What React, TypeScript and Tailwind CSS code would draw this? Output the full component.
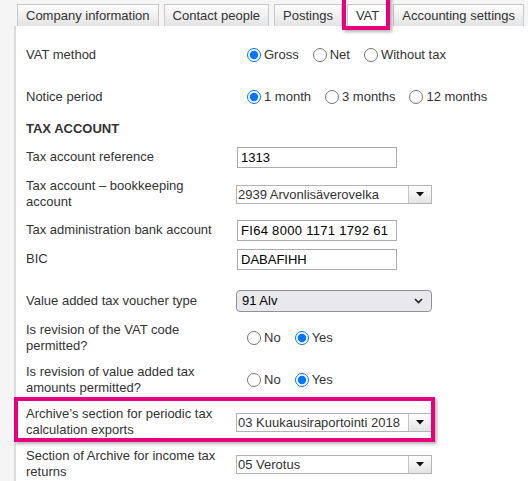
import React from "react";

const Tab = ({ label, active, empty }: { label: string; active?: boolean; empty?: boolean }) => (
  <div
    className={
      "h-[22px] shrink-0 whitespace-nowrap border border-b-0 border-[#c8c8c8] px-2 text-[13px] leading-[21px] text-[#333] " +
      (active ? "bg-white" : "bg-gradient-to-b from-[#fefefe] to-[#e3e3e3]") +
      (empty ? " w-[60px]" : "")
    }
  >
    {label}
  </div>
);

const Label = ({ children, bold }: { children: React.ReactNode; bold?: boolean }) => (
  <div
    className={
      "w-[200px] shrink-0 text-[13px] leading-[16px] text-[#333] " + (bold ? "font-bold" : "")
    }
  >
    {children}
  </div>
);

const Row = ({ className, children }: { className: string; children: React.ReactNode }) => (
  <div className={"flex items-center gap-[10px] " + className}>{children}</div>
);

const Radio = ({
  name,
  label,
  checked,
  first,
}: {
  name: string;
  label: string;
  checked?: boolean;
  first?: boolean;
}) => (
  <label className={"flex items-center text-[13px] text-[#333] " + (first ? "" : "ml-[14px]")}>
    <input
      type="radio"
      name={name}
      defaultChecked={checked}
      className="m-0 h-[14px] w-[14px]"
    />
    <span className="ml-[3px]">{label}</span>
  </label>
);

const TextBox = ({ value, wide }: { value: string; wide?: boolean }) => (
  <input
    readOnly
    value={value}
    className={
      "ml-px h-[21px] w-[160px] border border-[#ababab] bg-white px-[3px] text-[13px] text-black outline-none " +
      (wide ? "tracking-[0.3px]" : "")
    }
  />
);

const OldSelect = ({ value }: { value: string }) => (
  <div className="flex h-[19px] w-[196px] border border-[#b4b4b4] bg-white">
    <div className="flex-1 overflow-hidden whitespace-nowrap pl-[1px] text-[13px] leading-[17px] text-[#333]">
      {value}
    </div>
    <div className="flex w-[23px] items-center justify-center border-l border-[#c4c4c4] bg-gradient-to-b from-white to-[#e4e4e4]">
      <svg width="8" height="5" viewBox="0 0 8 5">
        <polygon points="0,0 8,0 4,4.5" fill="#111" />
      </svg>
    </div>
  </div>
);

export default function App() {
  return (
    <div className="relative h-[481px] w-[528px] overflow-hidden bg-[#f5f5f5] font-[Liberation_Sans,Arial,sans-serif]">
      <div className="flex items-end gap-[5px] pl-[17px] pt-[4px]">
        <Tab label="Company information" />
        <Tab label="Contact people" />
        <Tab label="Postings" />
        <Tab label="VAT" active />
        <Tab label="Accounting settings" />
        <Tab label="" empty />
      </div>
      <div className="ml-[14px] h-[455px] border-l-2 border-[#dcdcdc] bg-white pl-[10px]">
        <div className="h-[14px]" />
        <Row className="h-[30px]">
          <Label>VAT method</Label>
          <div className="flex items-center pl-[11px]">
            <Radio name="vm" label="Gross" checked first />
            <Radio name="vm" label="Net" />
            <Radio name="vm" label="Without tax" />
          </div>
        </Row>
        <Row className="mt-[12px] h-[30px]">
          <Label>Notice period</Label>
          <div className="flex items-center pl-[11px]">
            <Radio name="np" label="1 month" checked first />
            <Radio name="np" label="3 months" />
            <Radio name="np" label="12 months" />
          </div>
        </Row>
        <Row className="mt-[7px] h-[20px]">
          <Label bold>TAX ACCOUNT</Label>
        </Row>
        <Row className="mt-[6px] h-[24px]">
          <Label>Tax account reference</Label>
          <TextBox value="1313" />
        </Row>
        <Row className="mt-[8px] h-[34px]">
          <Label>Tax account – bookkeeping account</Label>
          <OldSelect value="2939 Arvonlisäverovelka" />
        </Row>
        <Row className="mt-[7px] h-[24px]">
          <Label>Tax administration bank account</Label>
          <TextBox value="FI64 8000 1171 1792 61" wide />
        </Row>
        <Row className="mt-[5px] h-[24px]">
          <Label>BIC</Label>
          <TextBox value="DABAFIHH" />
        </Row>
        <Row className="mt-[18px] h-[24px]">
          <Label>Value added tax voucher type</Label>
          <div className="flex h-[22px] w-[196px] items-center justify-between rounded-[4px] border border-[#8f8f9d] bg-[#e9e9ed] pl-[5px] pr-[8px] text-[13px] text-black">
            <span>91 Alv</span>
            <svg width="9" height="6" viewBox="0 0 9 6">
              <path d="M1 1l3.5 3.5L8 1" fill="none" stroke="#222" strokeWidth="1.6" />
            </svg>
          </div>
        </Row>
        <Row className="mt-[8px] h-[34px]">
          <Label>Is revision of the VAT code permitted?</Label>
          <div className="flex items-center pl-[11px]">
            <Radio name="r1" label="No" first />
            <Radio name="r1" label="Yes" checked />
          </div>
        </Row>
        <Row className="mt-[8px] h-[34px]">
          <Label>Is revision of value added tax amounts permitted?</Label>
          <div className="flex items-center pl-[11px]">
            <Radio name="r2" label="No" first />
            <Radio name="r2" label="Yes" checked />
          </div>
        </Row>
        <Row className="mt-[8px] h-[34px]">
          <Label>Archive’s section for periodic tax calculation exports</Label>
          <OldSelect value="03 Kuukausiraportointi 2018" />
        </Row>
        <Row className="mt-[8px] h-[34px]">
          <Label>Section of Archive for income tax returns</Label>
          <OldSelect value="05 Verotus" />
        </Row>
      </div>

      <div className="pointer-events-none absolute left-[342px] top-[-10px] h-[40px] w-[48px] border-4 border-[#e6007e] shadow-[2px_2px_3px_rgba(0,0,0,0.3)]" />
      <div className="pointer-events-none absolute left-[14px] top-[397px] h-[45px] w-[421px] border-4 border-[#e6007e] shadow-[2px_2px_3px_rgba(0,0,0,0.3)]" />
    </div>
  );
}
